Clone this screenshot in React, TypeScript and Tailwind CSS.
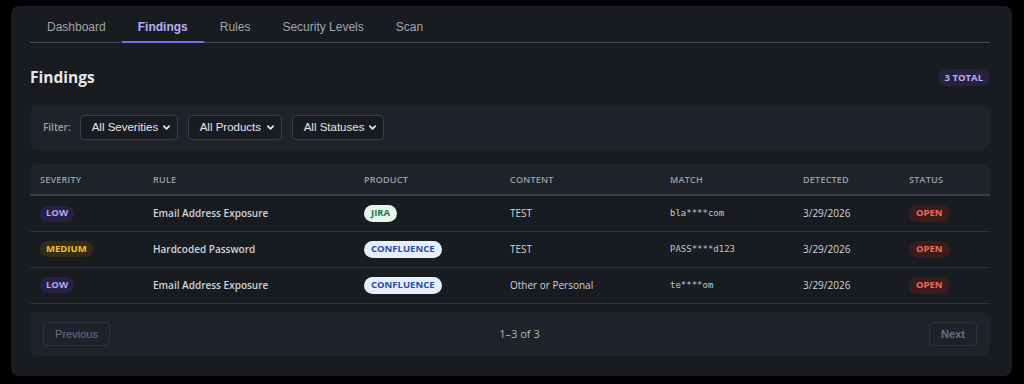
import React from 'react';

interface Finding {
    id: number;
    severity: 'LOW' | 'MEDIUM';
    rule: string;
    product: 'JIRA' | 'CONFLUENCE';
    content: string;
    match: string;
    detected: string;
    status: string;
}

const findings: Finding[] = [
    { id: 1, severity: 'LOW', rule: 'Email Address Exposure', product: 'JIRA', content: 'TEST', match: 'bla****com', detected: '3/29/2026', status: 'OPEN' },
    { id: 2, severity: 'MEDIUM', rule: 'Hardcoded Password', product: 'CONFLUENCE', content: 'TEST', match: 'PASS****d123', detected: '3/29/2026', status: 'OPEN' },
    { id: 3, severity: 'LOW', rule: 'Email Address Exposure', product: 'CONFLUENCE', content: 'Other or Personal', match: 'te****om', detected: '3/29/2026', status: 'OPEN' },
];

const tabs = ['Dashboard', 'Findings', 'Rules', 'Security Levels', 'Scan'];

const arial = { fontFamily: '"Liberation Sans", Arial, sans-serif' };

function Chevron() {
    return (
        <svg width="9" height="9" viewBox="0 0 10 10">
            <path d="M2 3.5 L5 6.5 L8 3.5" fill="none" stroke="#e5e7eb" strokeWidth="1.9" strokeLinecap="round" strokeLinejoin="round" />
        </svg>
    );
}

function FakeSelect({ label, width }: { label: string; width: string }) {
    return (
        <div className={`flex h-[25px] items-center justify-between whitespace-nowrap rounded border border-[#3a3f47] bg-[#181b20] pl-[11px] pr-[6px] text-[11.5px] text-[#e5e7eb] ${width}`}
            style={arial}>
            <span>{label}</span>
            <Chevron />
        </div>
    );
}

function SeverityBadge({ level }: { level: Finding['severity'] }) {
    const cls = level === 'MEDIUM' ? 'bg-[#342d14] text-[#f2c232]' : 'bg-[#272143] text-[#b4a4f4]';
    return <span className={`inline-flex h-[16px] items-center rounded-full px-[6px] text-[9.5px] font-bold ${cls}`}>{level}</span>;
}

function ProductBadge({ product }: { product: Finding['product'] }) {
    const cls = product === 'JIRA' ? 'bg-[#e3f7ea] text-[#1c7a42]' : 'bg-[#e6edfb] text-[#2450a6]';
    return <span className={`inline-flex h-[17px] items-center rounded-full px-[7px] text-[9.5px] font-bold ${cls}`}>{product}</span>;
}

export default function App() {
    return (
        <div className="min-h-screen bg-black pl-[11px] pt-[6px]" style={{ fontFamily: '"Open Sans", "Noto Sans", sans-serif' }}>
            <div className="h-[370px] w-[1001px] rounded-lg bg-[#181b1f] pl-[19px] pr-[22px]">
                <nav className="flex h-[37px] items-end border-b border-[#44484f]" style={arial}>
                    {tabs.map((tab) => (
                        <div key={tab}
                            className={`-mb-px flex h-[37px] items-center px-4 pt-[6px] text-[12px] ${tab === 'Findings' ? 'border-b-2 border-[#7c6cf0] font-bold text-[#b9aef8]' : 'border-b-2 border-transparent text-[#a1a6ae]'}`}
                            style={{ marginLeft: tab === 'Dashboard' ? 1 : 0 }}>
                            {tab}
                        </div>
                    ))}
                </nav>

                <div className="mt-[23px] flex items-center justify-between">
                    <h1 className="text-[15.5px] font-bold text-[#e5e7eb]">Findings</h1>
                    <span className="inline-flex h-[17px] items-center rounded-full bg-[#27203f] px-[7px] text-[9.5px] font-bold text-[#b9aef8]">3 TOTAL</span>
                </div>

                <div className="mt-[16px] flex h-[45px] items-center gap-[10px] rounded-lg bg-[#1f2329] px-[13px]">
                    <span className="mr-[-1px] text-[10px] font-semibold text-[#9aa0a8]">Filter:</span>
                    <FakeSelect label="All Severities" width="w-[98px]" />
                    <FakeSelect label="All Products" width="w-[94px]" />
                    <FakeSelect label="All Statuses" width="w-[92px]" />
                </div>

                <table className="mt-[14px] w-full border-collapse text-left">
                    <thead>
                        <tr className="h-[31px] border-b-2 border-[#3a3f47] bg-[#1f2329] text-[9px] tracking-wide text-[#9aa0a8]">
                            <th className="w-[123px] rounded-tl-lg pl-[10px] font-semibold">SEVERITY</th>
                            <th className="w-[211px] font-semibold">RULE</th>
                            <th className="w-[146px] font-semibold">PRODUCT</th>
                            <th className="w-[160px] font-semibold">CONTENT</th>
                            <th className="w-[133px] font-semibold">MATCH</th>
                            <th className="w-[106px] font-semibold">DETECTED</th>
                            <th className="rounded-tr-lg font-semibold">STATUS</th>
                        </tr>
                    </thead>
                    <tbody>
                        {findings.map((f) => (
                            <tr key={f.id} className="h-[36px] border-b border-[#30353c] text-[10px] text-[#d1d5db]">
                                <td className="pl-[10px]"><SeverityBadge level={f.severity} /></td>
                                <td className="font-semibold text-[#cfd3d9]">{f.rule}</td>
                                <td><ProductBadge product={f.product} /></td>
                                <td>{f.content}</td>
                                <td className="text-[9px] text-[#c4c8ce]" style={{ fontFamily: '"DejaVu Sans Mono", "Liberation Mono", monospace' }}>{f.match}</td>
                                <td>{f.detected}</td>
                                <td>
                                    <span className="inline-flex h-[17px] items-center rounded-full bg-[#3a1c1c] px-[7px] text-[9.5px] font-bold text-[#f26b5b]">{f.status}</span>
                                </td>
                            </tr>
                        ))}
                    </tbody>
                </table>

                <div className="mt-[8px] flex h-[44px] items-center justify-between rounded-lg bg-[#1f2329] px-[13px]">
                    <button className="h-[24px] w-[67px] rounded border border-[#2f343c] text-[11px] text-[#6b6d8c]" style={arial}>Previous</button>
                    <span className="text-[11px] text-[#b4b8bf]">1–3 of 3</span>
                    <button className="h-[24px] w-[48px] rounded border border-[#2f343c] text-[11px] font-bold text-[#6b6d8c]" style={arial}>Next</button>
                </div>
            </div>
        </div>
    );
}
